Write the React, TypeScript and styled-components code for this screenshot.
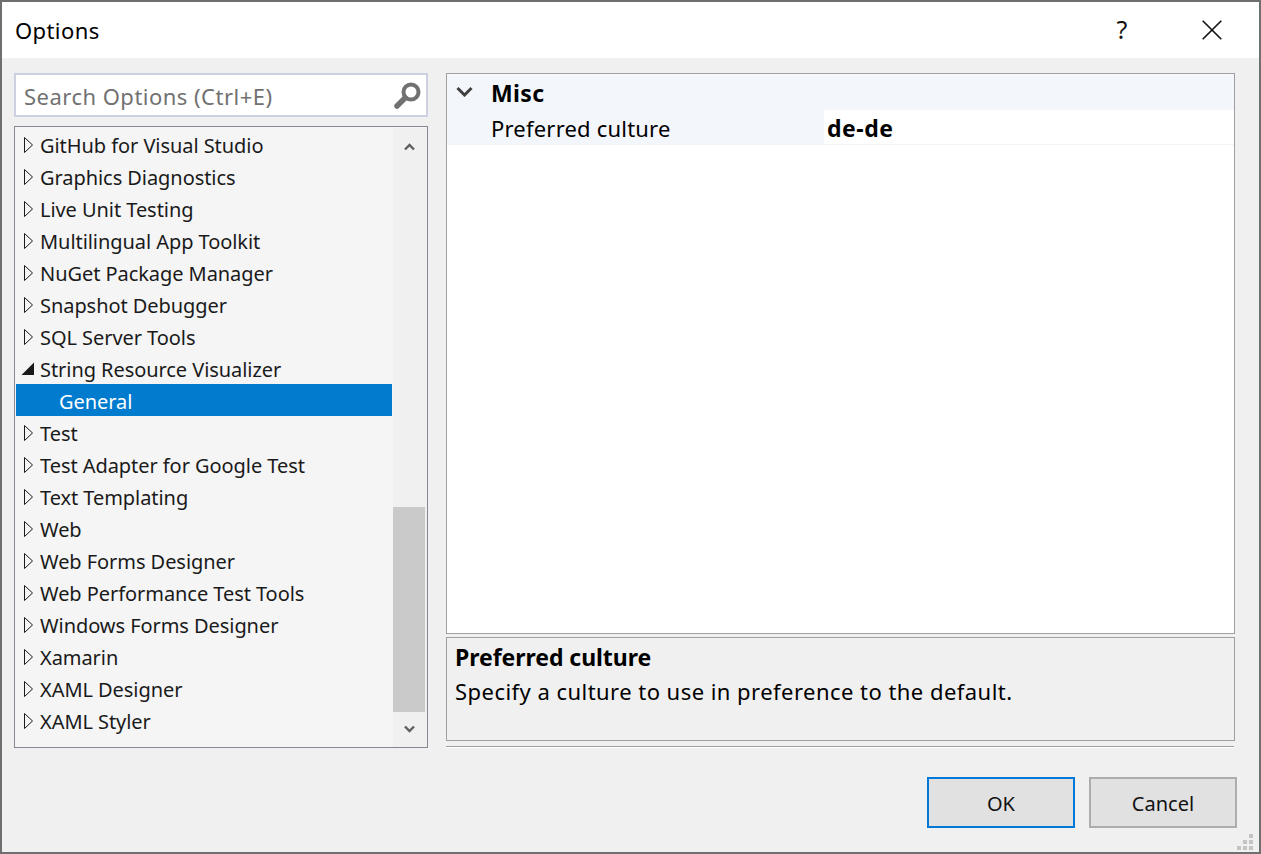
import React from "react";
import styled, { createGlobalStyle } from "styled-components";

const Global = createGlobalStyle`
  html, body { margin: 0; padding: 0; background: #6e6e6e; }
  * { box-sizing: border-box; }
  body { font-family: "Noto Sans", "Open Sans", sans-serif; }
`;
const Win = styled.div`
  position: relative; width: 1261px; height: 854px; border: 2px solid #6f6f6f;
  background: #f0f0f0; display: flex; flex-direction: column; overflow: hidden;
  color: #1a1a1a; font-size: 20px; letter-spacing: 0;
`;
const TitleBar = styled.div`
  height: 56px; background: #fff; display: flex; align-items: center;
  padding: 0 0 0 13px; flex: none;
`;
const Title = styled.div` flex: 1; font-size: 22px; color: #000; letter-spacing: 0.4px; line-height: 56px; margin-top: -1px;`;
const Help = styled.div` width: 20px; margin-right: 70px; font-size: 25px; color: #111; text-align: center; line-height: 56px; margin-top: -2px;`;
const Close = styled.svg` display: block; width: 20px; height: 20px; margin-right: 37px; margin-top: -1px;`;
const Body = styled.div` display: flex; gap: 18px; padding: 15px 24px 0 12px; flex: none; `;
const Left = styled.div` width: 414px; display: flex; flex-direction: column; gap: 9px; `;
const Search = styled.div`
  height: 44px; border: 2px solid #ccd0e0; background: #fff; display: flex; align-items: center;
  padding: 0 5px 0 8px; justify-content: space-between;
`;
const Placeholder = styled.div` color: #717171; font-size: 22px; letter-spacing: 0.48px; margin-top: 2px;`;
const Tree = styled.div`
  height: 622px; border: 1px solid #868794; padding: 1px 0 0 1px; background: #f5f5f5; display: flex;
`;
const Rows = styled.div` width: 376px; margin-right: 1px; flex: none; letter-spacing: -0.06px; `;
const Row = styled.div<{ $sel?: boolean; $child?: boolean }>`
  height: 32px; display: flex; align-items: center; white-space: nowrap;
  padding-left: ${(p) => (p.$child ? 43 : 5)}px;
  background: ${(p) => (p.$sel ? "#007bce" : "transparent")};
  color: ${(p) => (p.$sel ? "#fff" : "#1a1a1a")};
`;
const Arrow = styled.svg` width: 14px; height: 18px; flex: none; margin-right: 5px; margin-top: 1px; display: block;`;
const RowText = styled.span` margin-top: 4px; line-height: 32px;`;
const Scroll = styled.div` width: 34px; height: 100%; background: #f0f0f0; display: flex; flex-direction: column; padding-right: 2px; flex: none; position: relative; `;
const ScrollBtn = styled.svg` position: absolute; left: 11px; width: 11px; height: 8px; display: block; `;
const Thumb = styled.div` position: absolute; left: 0; width: 32px; top: 379px; height: 205px; background: #cacaca; `;
const Right = styled.div` width: 789px; display: flex; flex-direction: column; `;
const Grid = styled.div` height: 561px; border: 1px solid #a0a0a0; background: #fff; `;
const GroupRow = styled.div` height: 36px; background: #f3f6fb; display: flex; align-items: center; font-weight: 700; color: #000; font-size: 23px; letter-spacing: 0.4px; padding-top: 2px; `;
const GroupChevron = styled.svg` width: 17px; height: 11px; margin: -3px 18px 0 9px; display: block; `;
const PropRow = styled.div` height: 35px; display: flex; border-bottom: 1px solid #f1f4f9; `;
const PropName = styled.div` width: 377px; background: #f3f6fb; padding-left: 44px; line-height: 37px; color: #000; font-size: 22px; letter-spacing: 0.2px; `;
const PropValue = styled.div` flex: 1; padding-left: 3px; font-weight: 700; color: #000; line-height: 37px; font-size: 23px; letter-spacing: 0.5px; `;
const Desc = styled.div` margin-top: 3px; height: 104px; border: 1px solid #a0a0a0; padding: 3px 8px 0; color: #000; `;
const DescTitle = styled.div` font-weight: 700; font-size: 23px; line-height: 34px; letter-spacing: -0.05px; margin-top: -1px; `;
const DescText = styled.div` line-height: 34px; font-size: 22px; letter-spacing: 0.46px; `;
const Sep = styled.div` margin-top: 5px; margin-right: 1px; height: 2px; border-top: 1px solid #a0a0a0; background: #fff; `;
const Footer = styled.div` display: flex; justify-content: flex-end; gap: 14px; padding: 29px 22px 0 0; `;
const Btn = styled.div<{ $primary?: boolean }>`
  width: 148px; height: 51px; background: #e1e1e1; border: 2px solid ${(p) => (p.$primary ? "#0078d7" : "#adadad")};
  display: flex; align-items: center; justify-content: center; color: #111; padding-top: 1px;
`;
const Grip = styled.svg` position: absolute; right: 0; bottom: 0; width: 22px; height: 20px; display: block; `;

const items: [string, ("open" | "sel")?][] = [
  ["GitHub for Visual Studio"], ["Graphics Diagnostics"], ["Live Unit Testing"], ["Multilingual App Toolkit"],
  ["NuGet Package Manager"], ["Snapshot Debugger"], ["SQL Server Tools"], ["String Resource Visualizer", "open"],
  ["General", "sel"], ["Test"], ["Test Adapter for Google Test"], ["Text Templating"], ["Web"], ["Web Forms Designer"],
  ["Web Performance Test Tools"], ["Windows Forms Designer"], ["Xamarin"], ["XAML Designer"], ["XAML Styler"],
];

export default function App() {
  return (
    <>
      <Global />
      <Win>
        <TitleBar>
          <Title>Options</Title>
          <Help>?</Help>
          <Close viewBox="0 0 20 20"><path d="M0.7 0.7 L19.3 19.3 M19.3 0.7 L0.7 19.3" stroke="#111" strokeWidth="1.6" fill="none" /></Close>
        </TitleBar>
        <Body>
          <Left>
            <Search>
              <Placeholder>Search Options (Ctrl+E)</Placeholder>
              <svg width="27" height="27" viewBox="0 0 27 27" style={{ display: "block" }}>
                <circle cx="17" cy="10" r="7.5" fill="none" stroke="#717171" strokeWidth="4" />
                <path d="M11 16 L3 24" stroke="#717171" strokeWidth="5.5" strokeLinecap="round" />
              </svg>
            </Search>
            <Tree>
              <Rows>
                {items.map(([t, k]) => (
                  <Row key={t} $sel={k === "sel"} $child={k === "sel"}>
                    {k !== "sel" && (
                      <Arrow viewBox="0 0 14 18">
                        {k === "open"
                          ? <path d="M0.5 15 L13 15 L13 2.5 Z" fill="#1a1a1a" />
                          : <path d="M3.5 1.5 L11.5 9 L3.5 16.5 Z" fill="none" stroke="#1a1a1a" strokeWidth="1" />}
                      </Arrow>
                    )}
                    <RowText>{t}</RowText>
                  </Row>
                ))}
              </Rows>
              <Scroll>
                <ScrollBtn viewBox="0 0 11 8" style={{ top: 15 }}><path d="M1 6.5 L5.5 2 L10 6.5" fill="none" stroke="#5f5f5f" strokeWidth="2.4" /></ScrollBtn>
                <Thumb />
                <ScrollBtn viewBox="0 0 11 8" style={{ top: 597 }}><path d="M1 1.5 L5.5 6 L10 1.5" fill="none" stroke="#5f5f5f" strokeWidth="2.4" /></ScrollBtn>
              </Scroll>
            </Tree>
          </Left>
          <Right>
            <Grid>
              <GroupRow>
                <GroupChevron viewBox="0 0 17 11"><path d="M1.5 2 L8.5 9 L15.5 2" fill="none" stroke="#404040" strokeWidth="3" /></GroupChevron>
                Misc
              </GroupRow>
              <PropRow>
                <PropName>Preferred culture</PropName>
                <PropValue>de-de</PropValue>
              </PropRow>
            </Grid>
            <Desc>
              <DescTitle>Preferred culture</DescTitle>
              <DescText>Specify a culture to use in preference to the default.</DescText>
            </Desc>
            <Sep />
          </Right>
        </Body>
        <Footer>
          <Btn $primary>OK</Btn>
          <Btn>Cancel</Btn>
        </Footer>
        <Grip viewBox="0 0 22 20">
          {[[12, 2], [6, 8], [12, 8], [0, 14], [6, 14], [12, 14]].map(([x, y]) => (
            <rect key={`${x}-${y}`} x={x} y={y} width="4" height="4" fill="#c4c4c4" />
          ))}
        </Grip>
      </Win>
    </>
  );
}
